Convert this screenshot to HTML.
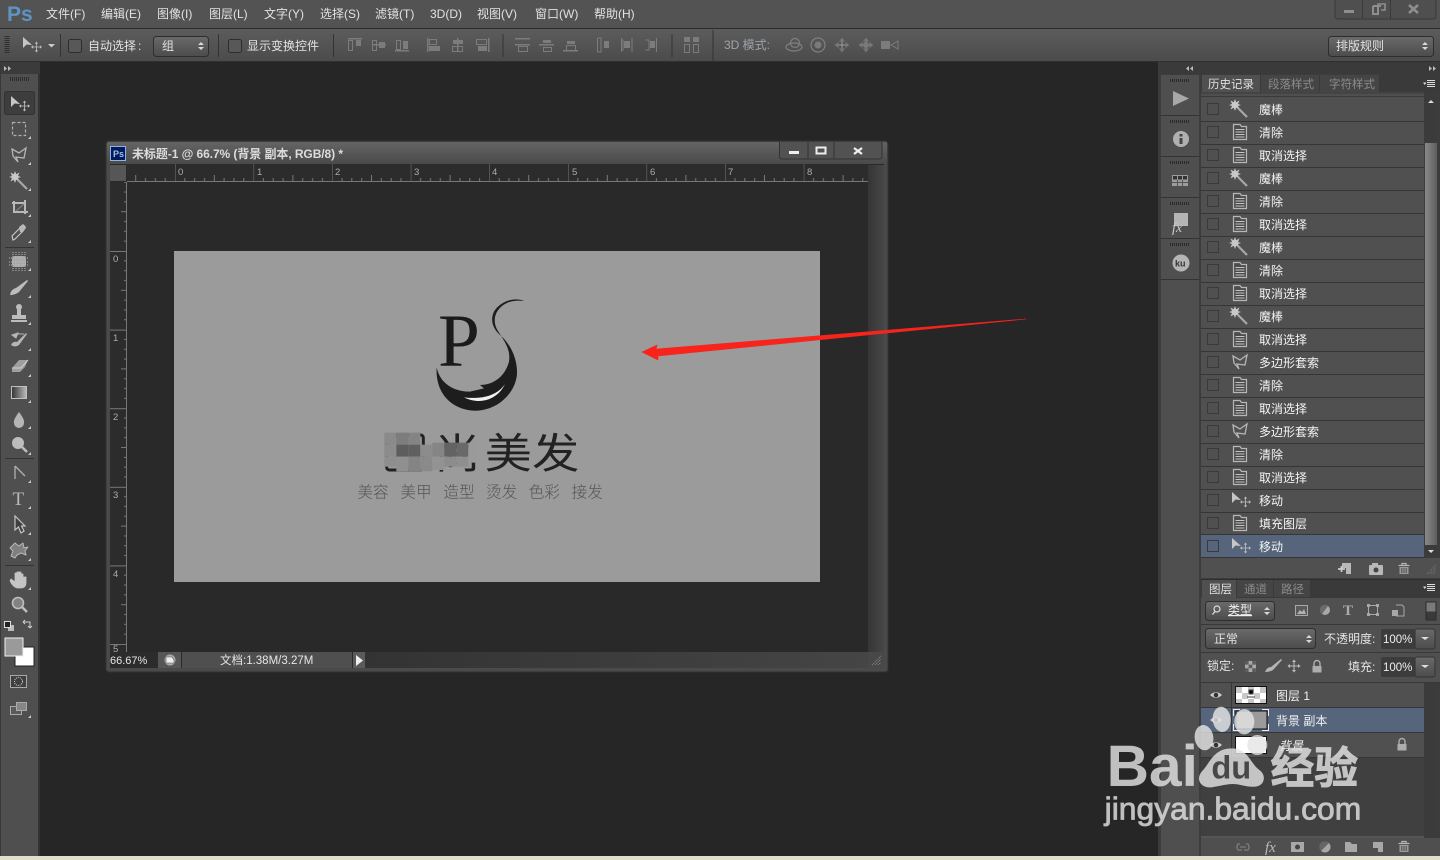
<!DOCTYPE html>
<html lang="zh-CN">
<head>
<meta charset="utf-8">
<title>Photoshop</title>
<style>
html,body{margin:0;padding:0;background:#262626;overflow:hidden}
svg{display:block;position:absolute;left:0;top:0}
text{font-family:"Liberation Sans","WenQuanYi Zen Hei","Noto Sans CJK SC",sans-serif;font-size:12px;fill:#e6e6e6}
.m{font-size:12px;fill:#e2e2e2}
.o{font-size:12px;fill:#e2e2e2}
.h{font-size:12px;fill:#f4f4f4}
.t{font-size:11.5px;fill:#e0e0e0}
.td{font-size:11.5px;fill:#8c8c8c}
.r{font-size:9.5px;fill:#a3aebb}
.st{fill:none;stroke:#b0b0b0;stroke-width:1.2}
.gf{fill:#b4b4b4}
.gd{fill:#7d7d7d}
.sd{fill:none;stroke:#7f7f7f;stroke-width:1.2}
</style>
</head>
<body>
<svg width="1440" height="860" viewBox="0 0 1440 860" xmlns="http://www.w3.org/2000/svg">
<defs>
<linearGradient id="gOpt" x1="0" y1="0" x2="0" y2="1"><stop offset="0" stop-color="#5c5c5c"/><stop offset="1" stop-color="#4b4b4b"/></linearGradient>
<linearGradient id="gSel" x1="0" y1="0" x2="0" y2="1"><stop offset="0" stop-color="#6a6a6a"/><stop offset="1" stop-color="#4c4c4c"/></linearGradient>
<linearGradient id="gTitle" x1="0" y1="0" x2="0" y2="1"><stop offset="0" stop-color="#646464"/><stop offset="1" stop-color="#4a4a4a"/></linearGradient>
<linearGradient id="gScr" x1="0" y1="0" x2="1" y2="0"><stop offset="0" stop-color="#353535"/><stop offset="1" stop-color="#474747"/></linearGradient>
<linearGradient id="gThumb" x1="0" y1="0" x2="1" y2="0"><stop offset="0" stop-color="#8a8a8a"/><stop offset="1" stop-color="#5e5e5e"/></linearGradient>
<linearGradient id="gGrad" x1="0" y1="0" x2="1" y2="0"><stop offset="0" stop-color="#333"/><stop offset="1" stop-color="#bbb"/></linearGradient>
<linearGradient id="gStat" x1="0" y1="0" x2="1" y2="0"><stop offset="0" stop-color="#333"/><stop offset="1" stop-color="#454545"/></linearGradient>
<pattern id="rulH" x="175" y="164" width="78.6" height="17" patternUnits="userSpaceOnUse">
<path d="M0 0V17M9.8 14V17M19.6 14V17M29.5 14V17M39.3 11V17M49.1 14V17M59 14V17M68.8 14V17" stroke="#787878" stroke-width="1" fill="none"/></pattern>
<pattern id="rulV" x="110" y="251" width="17" height="78.6" patternUnits="userSpaceOnUse">
<path d="M0 .5H17M14 9.8H17M14 19.6H17M14 29.5H17M11 39.3H17M14 49.1H17M14 59H17M14 68.8H17" stroke="#787878" stroke-width="1" fill="none"/></pattern>
<pattern id="chk" x="1236" y="687" width="12" height="12" patternUnits="userSpaceOnUse"><rect width="12" height="12" fill="#fff"/><rect width="6" height="6" fill="#c8c8c8"/><rect x="6" y="6" width="6" height="6" fill="#c8c8c8"/></pattern>

<path id="tri" d="M3 0V3H0Z" fill="#c9c9c9"/>
<g id="cross4"><path d="M0-5V5M-5 0H5" stroke="#bdbdbd" stroke-width="1" fill="none"/><path d="M0-6.5L-2-4H2ZM0 6.5L-2 4H2ZM-6.5 0L-4-2V2ZM6.5 0L4-2V2Z" fill="#bdbdbd"/></g>
<g id="mv"><path d="M-8-8V3L-4.5-.5 1 0Z" fill="#c6c6c6"/><use href="#cross4" transform="translate(5.5 2) scale(.85)"/></g>
<g id="wand"><path d="M-4-10L-2.8-6.8 .5-8.5-1-5 2-4-1-3 .5 .5-2.8-1.2-4 2-5.2-1.2-8.500 .5-7-3-10-4-7-5-8.500-8.500-5.200-6.800Z" fill="#c8c8c8"/><path d="M-1-1L8 8" stroke="#a8a8a8" stroke-width="2.200"/></g>
<g id="doc"><path d="M-6.500-7.500V7.500H6.500V-5.500H1.500L0-7.500Z" fill="#4d4d4d" stroke="#b8b8b8" stroke-width="1.200"/><path d="M-4.500-2.500H4.500M-4.500 0H4.500M-4.500 2.500H4.500M-4.500 5H4.500" stroke="#c4c4c4" stroke-width="1"/></g>
<g id="polyL"><path d="M-7-6L0-2 7-7 5 3-3 2-1 7-6 1Z" fill="none" stroke="#b5b5b5" stroke-width="1.300"/></g>
<g id="eye"><path d="M-6 0Q0-5.500 6 0Q0 5.500-6 0Z" fill="#cfcfcf"/><circle r="2.300" fill="#333"/></g>
<g id="trash"><path d="M-5.500-3.500H5.500M-2-3.500V-5.500H2V-3.500" stroke="#b5b5b5" stroke-width="1.300" fill="none"/><path d="M-4.500-2V5H4.500V-2Z" fill="#9a9a9a"/><path d="M-2.200-1V4M0-1V4M2.200-1V4" stroke="#4d4d4d"/></g>
<g id="lock"><path d="M-3-1V-3.500A3 3 0 0 1 3-3.500V-1" fill="none" stroke="#adadad" stroke-width="1.400"/><rect x="-4.500" y="-1" width="9" height="6.500" fill="#adadad"/></g>
<g id="sel"><path d="M0-4L-3-1H3ZM0 4L-3 1H3Z" fill="#d8d8d8"/></g>
<g id="menuI"><path d="M-7-1.500L-3.500-1.500-5.200 1Z" fill="#ddd"/><path d="M-3-3.500H5M-3-1.500H5M-3 .5H5M-3 2.500H5" stroke="#ddd" stroke-width="1"/></g>
</defs>

<!-- base -->
<rect width="1440" height="860" fill="#262626"/>
<rect y="0" width="1440" height="28" fill="#535353"/>
<rect y="28" width="1440" height="1" fill="#2b2b2b"/>
<rect y="29" width="1440" height="33" fill="url(#gOpt)"/>
<rect y="61" width="1440" height="1" fill="#303030"/>

<!-- menu -->
<text x="7" y="21" style="font-size:21px;font-weight:bold;fill:#5f93c4">Ps</text>
<text class="m" x="46" y="18">文件(F)</text>
<text class="m" x="101" y="18">编辑(E)</text>
<text class="m" x="157" y="18">图像(I)</text>
<text class="m" x="209" y="18">图层(L)</text>
<text class="m" x="264" y="18">文字(Y)</text>
<text class="m" x="320" y="18">选择(S)</text>
<text class="m" x="375" y="18">滤镜(T)</text>
<text class="m" x="430" y="18">3D(D)</text>
<text class="m" x="477" y="18">视图(V)</text>
<text class="m" x="535" y="18">窗口(W)</text>
<text class="m" x="594" y="18">帮助(H)</text>

<!-- window controls -->
<path d="M1335 0V16Q1335 19 1338 19H1433Q1436 19 1436 16V0" fill="#4f4f4f" stroke="#3a3a3a"/>
<path d="M1362.500 0V19M1390.500 0V19" stroke="#3a3a3a"/>
<rect x="1344" y="10" width="10" height="3" fill="#8e8e8e"/>
<path d="M1373 6H1381M1373 6V14H1378V7" fill="none" stroke="#8e8e8e" stroke-width="2"/><path d="M1377 4H1385V10H1381" fill="none" stroke="#8e8e8e" stroke-width="1.600"/>
<path d="M1409 5L1418 13M1418 5L1409 13" stroke="#8e8e8e" stroke-width="2.600"/>

<!-- options bar -->
<path d="M7 36V54" stroke="#2e2e2e" stroke-width="5" stroke-dasharray="1 1"/>
<use href="#mv" x="31" y="45" transform="translate(0 0)"/>
<path d="M48 44H55L51.500 47.500Z" fill="#ccc"/>
<path d="M60.500 34V57M218.500 34V57M333.500 34V57M503 34V57M672 34V57M713 30V61" stroke="#333" stroke-width="1"/>
<rect x="68.500" y="39.500" width="13" height="13" rx="2" fill="#585858" stroke="#2d2d2d"/>
<text class="o" x="88" y="50">自动选择<tspan dx="2">:</tspan></text>
<rect x="153.500" y="36.500" width="55" height="20" rx="3" fill="url(#gSel)" stroke="#2e2e2e"/>
<text class="o" x="162" y="50">组</text>
<use href="#sel" x="201" y="46"/>
<rect x="228.500" y="39.500" width="13" height="13" rx="2" fill="#585858" stroke="#2d2d2d"/>
<text class="o" x="247" y="50">显示变换控件</text>
<!-- align icons -->
<g fill="#7c7c7c" stroke="none">
<rect x="348" y="38" width="14" height="1.500"/><rect x="356" y="40" width="5" height="6"/>
<rect x="372" y="44" width="14" height="1.500"/><rect x="379" y="42" width="6" height="6"/>
<rect x="395" y="50" width="14" height="1.500"/><rect x="403" y="41" width="5" height="8"/>
<rect x="427" y="38" width="1.500" height="14"/><rect x="429" y="46" width="11" height="5"/>
<rect x="457" y="38" width="1.500" height="14"/><rect x="453" y="40" width="10" height="4"/>
<rect x="476" y="38" width="1.500" height="14" transform="translate(12 0)"/><rect x="478" y="46" width="9" height="5"/>
<rect x="515" y="38" width="15" height="1.500"/><rect x="515" y="44" width="15" height="1.500"/>
<rect x="539" y="44" width="15" height="1.500"/><rect x="543" y="40" width="8" height="3"/>
<rect x="563" y="50" width="15" height="1.500"/><rect x="567" y="41" width="8" height="3"/>
<rect x="604" y="41" width="5" height="7"/><rect x="624" y="41" width="6" height="7"/><rect x="650" y="41" width="5" height="7"/>
<rect x="684" y="37" width="6" height="5"/><rect x="693" y="37" width="6" height="5"/>
</g>
<g fill="none" stroke="#7c7c7c" stroke-width="1">
<rect x="348.500" y="40.500" width="4" height="10"/><rect x="372.500" y="40.500" width="4" height="10"/><rect x="396.500" y="40.500" width="4" height="9"/>
<rect x="429.500" y="39.500" width="7" height="5"/><rect x="452.500" y="46.500" width="10" height="5"/><rect x="476.500" y="39.500" width="10" height="5"/>
<rect x="518.500" y="46.500" width="9" height="5"/><rect x="543.500" y="47.500" width="8" height="4"/><rect x="566.500" y="45.500" width="9" height="5"/>
<path d="M597.500 38V52M597.500 38H601V52H597.500M621.500 38V52M621.500 40H623V50H621.500M632 38V52M645.500 40H649V50H645.500M656.500 38V52"/>
<rect x="684.500" y="44.500" width="5" height="8"/><rect x="693.500" y="44.500" width="5" height="8"/>
</g>
<text x="724" y="49" style="font-size:12px;fill:#9ea3a8">3D 模式:</text>
<g class="sd">
<ellipse cx="794" cy="47" rx="8" ry="4"/><circle cx="795" cy="43" r="4.500"/>
<circle cx="818" cy="45" r="7"/>
<use href="#cross4" x="842" y="45" opacity=".7"/>
<use href="#cross4" x="866" y="45" opacity=".7"/>
</g>
<circle cx="818" cy="45" r="3.500" fill="#7a7a7a"/>
<circle cx="866" cy="45" r="3" fill="#7a7a7a"/>
<rect x="881" y="41" width="9" height="8" fill="#7c7c7c"/><path d="M891 45L898 41V49Z" fill="none" stroke="#7c7c7c"/>
<rect x="1328.500" y="36.500" width="105" height="20" rx="3" fill="url(#gSel)" stroke="#2e2e2e"/>
<text class="o" x="1336" y="50">排版规则</text>
<use href="#sel" x="1425" y="46"/>

<!-- left toolbar -->
<rect x="0" y="62" width="40" height="794" fill="#4f4f4f"/>
<rect x="38" y="62" width="2" height="794" fill="#333"/>
<rect x="0" y="62" width="40" height="12" fill="#3b3b3b"/>
<rect x="0" y="62" width="1" height="794" fill="#383838"/>
<path d="M4 66L7 68.500 4 71ZM8 66L11 68.500 8 71Z" fill="#bbb"/>
<path d="M10 79H29" stroke="#2e2e2e" stroke-width="4" stroke-dasharray="1 1"/>
<rect x="4.500" y="91.500" width="30" height="23" rx="2" fill="#3d3d3d" stroke="#333"/>
<use href="#mv" x="19" y="104"/>
<rect x="12.500" y="122.500" width="13" height="13" class="st" stroke-dasharray="3 2"/><use href="#tri" x="28" y="136"/>
<use href="#polyL" x="19" y="155"/><use href="#tri" x="28" y="162"/>
<use href="#wand" x="19" y="181"/><use href="#tri" x="28" y="188"/>
<path d="M14 203H25V214M12 203H14M14 201V212H25M25 200V203M25 212H28" fill="none" stroke="#b8b8b8" stroke-width="2"/><path d="M16 211L24 204" stroke="#888"/><use href="#tri" x="28" y="214"/>
<path d="M13 240L12 236 20 228 23 231 15 239Z" fill="none" stroke="#c4c4c4" stroke-width="1.200"/><path d="M20 232L19 227 23 224Q26 226 26 228L23 232Z" fill="#b8b8b8"/><use href="#tri" x="28" y="240"/>
<rect x="5" y="247" width="29" height="1" fill="#333"/>
<rect x="12" y="256" width="14" height="11" rx="3" fill="#a8a8a8"/><path d="M13 252V271M16 252V271M19 252V271M22 252V271M25 252V271M9 258H29M9 262H29M9 265H29" stroke="#b8b8b8" stroke-dasharray="1 1"/><use href="#tri" x="28" y="268"/>
<path d="M10 295Q11 289 16 288L27 280 28 281 19 292Q15 295 10 295Z" fill="#bcbcbc"/><use href="#tri" x="28" y="295"/>
<path d="M17 307H21V315H26V319H12V315H17Z" fill="#bcbcbc"/><circle cx="19" cy="307" r="3" fill="#bcbcbc"/><rect x="11" y="320" width="16" height="2" fill="#bcbcbc"/><use href="#tri" x="28" y="322"/>
<path d="M11 345Q13 341 17 342L26 333 27 334 19 345Q15 348 11 345Z" fill="#b6b6b6"/><path d="M12 335L18 333 16 338ZM16 334H24" fill="#b6b6b6" stroke="#b6b6b6"/><use href="#tri" x="28" y="348"/>
<path d="M12 368L19 360H28L25 367 20 372H12Z" fill="#9f9f9f"/><path d="M12 368H21L28 360" fill="none" stroke="#cfcfcf"/><use href="#tri" x="28" y="374"/>
<rect x="11.500" y="386.500" width="15" height="12" fill="url(#gGrad)" stroke="#c0c0c0"/><use href="#tri" x="28" y="400"/>
<path d="M19 412Q25 420 24 423A5 5 0 0 1 14 423Q13 420 19 412Z" fill="#b5b5b5"/><use href="#tri" x="28" y="426"/>
<circle cx="18" cy="443" r="6" fill="#bdbdbd"/><path d="M22 447L27 452" stroke="#bdbdbd" stroke-width="2.500"/><use href="#tri" x="28" y="452"/>
<rect x="5" y="458" width="29" height="1" fill="#333"/>
<path d="M15 466V479M15 466L25 476" fill="none" stroke="#b0b0b0" stroke-width="1.300"/><use href="#tri" x="28" y="480"/>
<text x="12.500" y="505" style="font-family:'Liberation Serif',serif;font-size:19px;fill:#b9b9b9">T</text><use href="#tri" x="28" y="506"/>
<path d="M15 516V530L18.500 527 21 533 24 531 21.500 526H25Z" fill="#3f3f3f" stroke="#c4c4c4" stroke-width="1.200"/><use href="#tri" x="28" y="532"/>
<path d="M15 543L19 546 23 543 24 548 28 547 25 551 26 555 21 553 17 555 15 558 11 556 13 551 10 548Z" fill="#7f7f7f" stroke="#b8b8b8" stroke-linejoin="round"/><use href="#tri" x="28" y="558"/>
<rect x="5" y="565" width="29" height="1" fill="#333"/>
<path d="M11 579L15 582V573H17V580 572H19V580 572H21V580 574H23V583 577H26V584Q25 588 21 588H17Q13 587 10 581Z" fill="#c4c4c4" stroke="#c4c4c4" stroke-width=".8"/><use href="#tri" x="28" y="587"/>
<circle cx="18" cy="603" r="5.500" fill="#828282" stroke="#bdbdbd" stroke-width="1.600"/><path d="M22 607L27 612" stroke="#bdbdbd" stroke-width="2.500"/>
<rect x="8" y="625" width="6" height="6" fill="#bbb"/><rect x="4.500" y="621.500" width="6" height="6" fill="#222" stroke="#ddd"/>
<path d="M23 622H30V628M23 622L25 620M23 622L25 624M30 628L28 626M30 628L32 626" fill="none" stroke="#cfcfcf"/>
<rect x="15" y="647" width="19" height="19" fill="#fff" stroke="#222"/>
<rect x="5" y="638" width="18" height="18" fill="#9a9a9a" stroke="#f0f0f0"/>
<rect x="10.500" y="675.500" width="16" height="12" fill="#3f3f3f" stroke="#a8a8a8"/><circle cx="18.500" cy="681.500" r="4" fill="none" stroke="#d0d0d0" stroke-dasharray="1 1"/>
<rect x="10.500" y="706.500" width="11" height="8" fill="#5a5a5a" stroke="#aaa"/><rect x="16.500" y="702.500" width="10" height="8" fill="#868686" stroke="#aaa"/><use href="#tri" x="28" y="715"/>

<!-- document window -->
<rect x="106" y="141" width="782" height="531" rx="3" fill="#4a4a4a" stroke="#333"/>
<path d="M107 164V144Q107 142 109 142H885Q887 142 887 144V164Z" fill="url(#gTitle)"/>
<path d="M779.500 142V156Q779.500 159 782 159H879Q882 159 882 156V142" fill="#525252" stroke="#333"/>
<path d="M808 142V159M834 142V159" stroke="#333"/>
<rect x="789" y="151" width="10" height="3" fill="#eee"/>
<rect x="816.500" y="147.500" width="9" height="6" fill="none" stroke="#eee" stroke-width="2"/>
<path d="M854 148L862 154M862 148L854 154" stroke="#eee" stroke-width="2.200"/>
<rect x="110.500" y="146.500" width="15" height="14" fill="#001a5c" stroke="#8bb4e6"/>
<text x="113" y="157" style="font-size:9px;font-weight:bold;fill:#9cc4ee">Ps</text>
<text x="132" y="158" textLength="211" style="font-size:12px;font-weight:bold;fill:#dcdcdc">未标题-1 @ 66.7% (背景 副本, RGB/8) *</text>

<rect x="110" y="164" width="774" height="504" fill="#292929"/>
<rect x="127" y="164" width="741" height="17" fill="#2c2c2c"/>
<rect x="127" y="164" width="741" height="17" fill="url(#rulH)"/>
<rect x="127" y="181" width="741" height="1" fill="#777"/>
<rect x="110" y="182" width="17" height="470" fill="#2c2c2c"/>
<rect x="110" y="182" width="17" height="470" fill="url(#rulV)"/>
<rect x="126" y="182" width="1" height="470" fill="#777"/>
<rect x="110" y="165" width="16" height="16" fill="#565656"/>
<text class="r" x="178" y="175">0</text><text class="r" x="257" y="175">1</text><text class="r" x="335" y="175">2</text><text class="r" x="414" y="175">3</text><text class="r" x="492" y="175">4</text><text class="r" x="572" y="175">5</text><text class="r" x="650" y="175">6</text><text class="r" x="728" y="175">7</text><text class="r" x="807" y="175">8</text>
<text class="r" x="113" y="262">0</text><text class="r" x="113" y="341">1</text><text class="r" x="113" y="420">2</text><text class="r" x="113" y="498">3</text><text class="r" x="113" y="577">4</text><text class="r" x="113" y="652">5</text>
<rect x="868" y="165" width="16" height="487" fill="url(#gScr)"/>
<rect x="110" y="652" width="48" height="16" fill="#2c2c2c"/>
<rect x="158" y="652" width="23" height="16" fill="#565656"/>
<rect x="182" y="652" width="170" height="16" fill="#4f4f4f"/>
<rect x="353" y="652" width="12" height="16" fill="#5b5b5b"/>
<rect x="365" y="652" width="503" height="16" fill="url(#gStat)"/>
<rect x="868" y="652" width="16" height="16" fill="#484848"/>
<path d="M872 665L881 656M875 665L881 659M878 665L881 662" stroke="#8a8a8a" stroke-dasharray="1 1"/>
<text x="110" y="664" style="font-size:11px;fill:#e6e6e6">66.67%</text>
<circle cx="170" cy="660" r="5.500" fill="#aaa"/><path d="M166 657H172L174 660V663H166Z" fill="#eee" stroke="#555" stroke-width=".6"/>
<text x="220" y="664" style="font-size:11.500px;fill:#e6e6e6">文档:1.38M/3.27M</text>
<path d="M356 655V666L363 660.500Z" fill="#eee"/>

<!-- image -->
<rect x="174" y="251" width="646" height="331" fill="#9b9b9b"/>
<g transform="translate(340 280) scale(.33333)">
<text x="294" y="258" style="font-family:'Liberation Serif',serif;font-size:226px;fill:#1b1b1b">P</text>
<path d="M553 63C520 50 480 65 462 95C450 120 458 145 480 165C515 195 532 240 531 280C528 340 470 395 400 392C340 388 285 345 290 262C300 310 340 335 390 335L432 325 420 315C460 315 495 290 507 245C513 205 490 180 472 150C458 125 462 95 490 75C510 62 530 60 553 63Z" fill="#1d1d1d"/>
<path d="M372 352C420 358 470 350 495 312C475 355 425 378 372 352Z" fill="#f1f1f1"/>
<text transform="translate(282 564) scale(1 .88)" x="0" y="0" style="font-family:'Noto Sans CJK SC',sans-serif;font-size:140px;font-weight:400;fill:#222">尚</text>
<text transform="translate(434 564) scale(1 .88)" x="0" y="0" style="font-family:'Noto Sans CJK SC',sans-serif;font-size:142px;font-weight:400;fill:#222">美发</text>
<rect x="140" y="465" width="110" height="105" rx="8" fill="none" stroke="#222" stroke-width="9"/>
<g>
<rect x="133" y="458" width="36" height="36" fill="#8a8a8a"/><rect x="169" y="458" width="36" height="36" fill="#7d7d7d"/><rect x="205" y="458" width="36" height="36" fill="#848484"/>
<rect x="133" y="494" width="36" height="36" fill="#8c8c8c"/><rect x="169" y="494" width="36" height="36" fill="#5d5d5d"/><rect x="205" y="494" width="36" height="36" fill="#606060"/><rect x="241" y="494" width="36" height="36" fill="#8c8c8c"/><rect x="277" y="488" width="36" height="42" fill="#858585"/><rect x="313" y="488" width="36" height="42" fill="#636363"/><rect x="349" y="488" width="36" height="42" fill="#696969"/>
<rect x="133" y="530" width="36" height="30" fill="#8e8e8e"/><rect x="169" y="530" width="36" height="44" fill="#909090"/><rect x="205" y="530" width="36" height="44" fill="#848484"/><rect x="241" y="530" width="36" height="44" fill="#8a8a8a"/><rect x="277" y="530" width="36" height="40" fill="#939393"/><rect x="313" y="530" width="36" height="30" fill="#8c8c8c"/><rect x="349" y="530" width="36" height="30" fill="#8f8f8f"/>
<rect x="385" y="488" width="22" height="60" fill="#9a9a9a"/>
</g>
<text x="52" y="652" style="font-family:'Noto Sans CJK SC',sans-serif;font-size:47px;font-weight:300;fill:#555">美容</text>
<text x="181" y="652" style="font-family:'Noto Sans CJK SC',sans-serif;font-size:47px;font-weight:300;fill:#555">美甲</text>
<text x="310" y="652" style="font-family:'Noto Sans CJK SC',sans-serif;font-size:47px;font-weight:300;fill:#555">造型</text>
<text x="438" y="652" style="font-family:'Noto Sans CJK SC',sans-serif;font-size:47px;font-weight:300;fill:#555">烫发</text>
<text x="566" y="652" style="font-family:'Noto Sans CJK SC',sans-serif;font-size:47px;font-weight:300;fill:#555">色彩</text>
<text x="695" y="652" style="font-family:'Noto Sans CJK SC',sans-serif;font-size:47px;font-weight:300;fill:#555">接发</text>
</g>
<!-- red arrow -->
<path d="M642 352L657 345 656 349 1026 319 658 356 658 360Z" fill="#f8241c" stroke="#f8241c" stroke-width=".6"/>

<!-- right dock -->
<rect x="1158" y="62" width="282" height="794" fill="#3c3c3c"/>
<rect x="1160" y="62" width="280" height="12" fill="#3a3a3a"/>
<path d="M1189 66L1186 68.500 1189 71ZM1193 66L1190 68.500 1193 71ZM1429 66L1432 68.500 1429 71ZM1433 66L1436 68.500 1433 71Z" fill="#bbb"/>
<rect x="1161" y="75" width="38" height="781" fill="#4f4f4f"/>
<path d="M1161 115.500H1199M1161 156.500H1199M1161 197.500H1199M1161 238.500H1199M1161 279.500H1199" stroke="#333"/>
<path d="M1170 80.500H1190M1170 121.500H1190M1170 162.500H1190M1170 203.500H1190M1170 244.500H1190" stroke="#2a2a2a" stroke-width="3" stroke-dasharray="1 1"/>
<path d="M1173 91V106L1189 98.500Z" fill="#a8a8a8"/>
<circle cx="1181" cy="139" r="8" fill="#b0b0b0"/><rect x="1179.500" y="138" width="3" height="6" fill="#444"/><rect x="1179.500" y="134" width="3" height="2.500" fill="#444"/>
<rect x="1172" y="175" width="16" height="11" fill="#9c9c9c"/><path d="M1173 176H1177V179.500H1173ZM1178 176H1182V179.500H1178ZM1183 176H1187V179.500H1183Z" fill="#333"/><path d="M1177.500 180V186M1182.500 180V186M1172 182.500H1188" stroke="#555"/>
<rect x="1174" y="213" width="14" height="13" fill="#b5b5b5"/><text x="1172" y="232" style="font-family:'Liberation Serif',serif;font-style:italic;font-size:14px;fill:#ccc">fx</text>
<circle cx="1181" cy="263" r="8.500" fill="#b5b5b5"/><text x="1175" y="266.500" style="font-size:9px;font-weight:bold;fill:#333">ku</text>

<!-- history panel -->
<rect x="1201" y="75" width="239" height="18" fill="#3a3a3a"/>
<rect x="1202" y="75" width="58" height="18" fill="#505050"/>
<rect x="1261" y="75" width="58" height="17" fill="#454545"/>
<rect x="1320" y="75" width="59" height="17" fill="#454545"/>
<text class="t" x="1208" y="88">历史记录</text><text class="td" x="1268" y="88">段落样式</text><text class="td" x="1329" y="88">字符样式</text>
<use href="#menuI" x="1430" y="84"/>
<rect x="1201" y="92" width="223" height="6" fill="#4f4f4f"/>
<path d="M1201 93H1424M1201 96.500H1424" stroke="#3a3a3a"/>
<rect x="1425" y="93" width="12" height="465" fill="#3b3b3b"/>
<rect x="1425" y="143" width="12" height="402" fill="url(#gThumb)"/>
<path d="M1431 100L1428 103H1434ZM1431 553L1428 550H1434Z" fill="#ddd"/>
<rect x="1201" y="98" width="223" height="460" fill="#505050"/>
<rect x="1201" y="535" width="223" height="22" fill="#56657b"/>
<path d="M1201 121.500H1424M1201 144.500H1424M1201 167.500H1424M1201 190.500H1424M1201 213.500H1424M1201 236.500H1424M1201 259.500H1424M1201 282.500H1424M1201 305.500H1424M1201 328.500H1424M1201 351.500H1424M1201 374.500H1424M1201 397.500H1424M1201 420.500H1424M1201 443.500H1424M1201 466.500H1424M1201 489.500H1424M1201 512.500H1424M1201 534.500H1424M1201 557.500H1424" stroke="#363636"/>
<g fill="none" stroke="#3a3a3a">
<rect x="1207.500" y="103.500" width="11" height="11"/><rect x="1207.500" y="126.500" width="11" height="11"/><rect x="1207.500" y="149.500" width="11" height="11"/><rect x="1207.500" y="172.500" width="11" height="11"/><rect x="1207.500" y="195.500" width="11" height="11"/><rect x="1207.500" y="218.500" width="11" height="11"/><rect x="1207.500" y="241.500" width="11" height="11"/><rect x="1207.500" y="264.500" width="11" height="11"/><rect x="1207.500" y="287.500" width="11" height="11"/><rect x="1207.500" y="310.500" width="11" height="11"/><rect x="1207.500" y="333.500" width="11" height="11"/><rect x="1207.500" y="356.500" width="11" height="11"/><rect x="1207.500" y="379.500" width="11" height="11"/><rect x="1207.500" y="402.500" width="11" height="11"/><rect x="1207.500" y="425.500" width="11" height="11"/><rect x="1207.500" y="448.500" width="11" height="11"/><rect x="1207.500" y="471.500" width="11" height="11"/><rect x="1207.500" y="494.500" width="11" height="11"/><rect x="1207.500" y="517.500" width="11" height="11"/><rect x="1207.500" y="540.500" width="11" height="11"/>
</g>
<use href="#wand" x="1239" y="109"/><use href="#doc" x="1240" y="132"/><use href="#doc" x="1240" y="155"/>
<use href="#wand" x="1239" y="178"/><use href="#doc" x="1240" y="201"/><use href="#doc" x="1240" y="224"/>
<use href="#wand" x="1239" y="247"/><use href="#doc" x="1240" y="270"/><use href="#doc" x="1240" y="293"/>
<use href="#wand" x="1239" y="316"/><use href="#doc" x="1240" y="339"/><use href="#polyL" x="1240" y="362"/>
<use href="#doc" x="1240" y="385"/><use href="#doc" x="1240" y="408"/><use href="#polyL" x="1240" y="431"/>
<use href="#doc" x="1240" y="454"/><use href="#doc" x="1240" y="477"/><use href="#mv" x="1240" y="500"/>
<use href="#doc" x="1240" y="523"/><use href="#mv" x="1240" y="546"/>
<text class="h" x="1259" y="114">魔棒</text><text class="h" x="1259" y="137">清除</text><text class="h" x="1259" y="160">取消选择</text>
<text class="h" x="1259" y="183">魔棒</text><text class="h" x="1259" y="206">清除</text><text class="h" x="1259" y="229">取消选择</text>
<text class="h" x="1259" y="252">魔棒</text><text class="h" x="1259" y="275">清除</text><text class="h" x="1259" y="298">取消选择</text>
<text class="h" x="1259" y="321">魔棒</text><text class="h" x="1259" y="344">取消选择</text><text class="h" x="1259" y="367">多边形套索</text>
<text class="h" x="1259" y="390">清除</text><text class="h" x="1259" y="413">取消选择</text><text class="h" x="1259" y="436">多边形套索</text>
<text class="h" x="1259" y="459">清除</text><text class="h" x="1259" y="482">取消选择</text><text class="h" x="1259" y="505">移动</text>
<text class="h" x="1259" y="528">填充图层</text><text class="h" x="1259" y="551">移动</text>
<rect x="1201" y="558" width="239" height="20" fill="#505050"/>
<path d="M1338 569H1345M1341.500 566V572" stroke="#ccc" stroke-width="1.800"/><path d="M1342 563H1351V574H1346V568H1342Z" fill="#b8b8b8"/>
<rect x="1369" y="565" width="14" height="10" rx="1" fill="#b8b8b8"/><rect x="1372" y="563" width="6" height="3" fill="#b8b8b8"/><circle cx="1376" cy="570" r="2.500" fill="#444"/>
<use href="#trash" x="1404" y="569"/>
<path d="M1427 574L1436 565M1430 574L1436 568M1433 574L1436 571" stroke="#7a7a7a" stroke-dasharray="1 1"/>

<!-- layers panel -->
<rect x="1201" y="579" width="239" height="1" fill="#2e2e2e"/>
<rect x="1201" y="580" width="239" height="18" fill="#3a3a3a"/>
<rect x="1202" y="580" width="34" height="18" fill="#505050"/>
<rect x="1237" y="580" width="36" height="17" fill="#454545"/>
<rect x="1274" y="580" width="36" height="17" fill="#454545"/>
<text class="t" x="1209" y="593">图层</text><text class="td" x="1244" y="593">通道</text><text class="td" x="1281" y="593">路径</text>
<use href="#menuI" x="1430" y="588"/>
<rect x="1201" y="598" width="239" height="85" fill="#505050"/>
<path d="M1201 624.500H1440M1201 652.500H1440M1201 682.500H1440" stroke="#383838"/>
<rect x="1205.500" y="601.500" width="69" height="19" rx="3" fill="url(#gSel)" stroke="#2e2e2e"/>
<circle cx="1217" cy="609" r="3" fill="none" stroke="#ddd" stroke-width="1.200"/><path d="M1215 611.500L1212.500 614.500" stroke="#ddd" stroke-width="1.300"/>
<text x="1228" y="614" style="font-size:12px;fill:#eee;text-decoration:underline">类型</text>
<use href="#sel" x="1267" y="611"/>
<rect x="1295.500" y="605.500" width="12" height="10" fill="#5a5a5a" stroke="#a8a8a8"/><path d="M1297 614L1300 610 1302 612 1304 609 1306 614Z" fill="#b0b0b0"/>
<circle cx="1325" cy="610" r="5" fill="#a8a8a8"/><path d="M1322 614L1328 606A5 5 0 0 0 1322 614Z" fill="#6a6a6a"/>
<text x="1343" y="615" style="font-family:'Liberation Serif',serif;font-size:15px;font-weight:bold;fill:#aaa">T</text>
<rect x="1368.500" y="605.500" width="9" height="9" fill="none" stroke="#a8a8a8"/><path d="M1367 604h3v3h-3zM1376 604h3v3h-3zM1367 613h3v3h-3zM1376 613h3v3h-3z" fill="#a8a8a8"/>
<path d="M1396 605H1402L1404 607V616H1396" fill="none" stroke="#a8a8a8"/><rect x="1392" y="610" width="6" height="6" fill="#a8a8a8"/>
<rect x="1426" y="602" width="10" height="18" fill="#3a3a3a" stroke="#2c2c2c"/><rect x="1426.500" y="602.500" width="9" height="9" fill="#7a7a7a"/>
<rect x="1205.500" y="628.500" width="110" height="20" rx="3" fill="url(#gSel)" stroke="#2e2e2e"/>
<text class="o" x="1214" y="643">正常</text>
<use href="#sel" x="1309" y="639"/>
<text x="1324" y="643" style="font-size:12px;fill:#e4e4e4">不透明度:</text>
<rect x="1381" y="629" width="34" height="20" rx="2" fill="#3c3c3c"/>
<rect x="1415" y="629" width="20" height="20" rx="2" fill="url(#gSel)" stroke="#333"/>
<text x="1383" y="643" style="font-size:11.500px;fill:#eee">100%</text>
<path d="M1421 637H1429L1425 640Z" fill="#ddd"/>
<text x="1207" y="670" style="font-size:12px;fill:#e4e4e4">锁定:</text>
<rect x="1245" y="661" width="11" height="11" fill="#a8a8a8"/><path d="M1245 661h3.600v3.600h-3.600zM1252.300 661h3.600v3.600h-3.600zM1248.600 664.600h3.700v3.700h-3.700zM1245 668.300h3.600v3.700h-3.600zM1252.300 668.300h3.600v3.700h-3.600z" fill="#5c5c5c"/>
<path d="M1265 672Q1267 667 1271 667L1281 659 1282 660 1273 670Q1270 672 1265 672Z" fill="#b5b5b5"/>
<use href="#cross4" x="1294" y="666"/>
<use href="#lock" x="1317" y="667"/>
<text x="1348" y="671" style="font-size:12px;fill:#e4e4e4">填充:</text>
<rect x="1381" y="657" width="34" height="20" rx="2" fill="#3c3c3c"/>
<rect x="1415" y="657" width="20" height="20" rx="2" fill="url(#gSel)" stroke="#333"/>
<text x="1383" y="671" style="font-size:11.500px;fill:#eee">100%</text>
<path d="M1421 665H1429L1425 668Z" fill="#ddd"/>

<rect x="1201" y="683" width="223" height="155" fill="#404040"/>
<rect x="1425" y="683" width="12" height="155" fill="#3b3b3b"/>
<rect x="1201" y="683" width="223" height="24" fill="#505050"/>
<rect x="1201" y="708" width="223" height="24" fill="#56657b"/>
<rect x="1201" y="733" width="223" height="24" fill="#505050"/>
<path d="M1201 707.500H1424M1201 732.500H1424M1201 757.500H1424M1231.500 683V757" stroke="#363636"/>
<use href="#eye" x="1216" y="695"/><use href="#eye" x="1216" y="720"/><use href="#eye" x="1216" y="745"/>
<rect x="1235.500" y="686.500" width="31" height="17" fill="url(#chk)" stroke="#111"/>
<path d="M1249 690H1253V694H1249ZM1247 697H1255" stroke="#444"/>
<rect x="1236" y="711" width="31" height="18" fill="#9b9b9b" stroke="#111"/>
<path d="M1233.500 716V709.500H1240M1262 709.500H1268.500V716M1233.500 724V730.500H1240M1262 730.500H1268.500V724" fill="none" stroke="#eee"/>
<rect x="1235.500" y="736.500" width="31" height="17" fill="#fff" stroke="#111"/>
<text x="1276" y="700" style="font-size:12px;fill:#f2f2f2">图层 1</text>
<text x="1276" y="725" style="font-size:12px;fill:#f2f2f2">背景 副本</text>
<text x="1279" y="750" style="font-size:12px;font-style:italic;fill:#f2f2f2">背景</text>
<use href="#lock" x="1402" y="745"/>
<rect x="1201" y="838" width="239" height="18" fill="#4f4f4f"/>
<rect x="1201" y="836" width="223" height="2" fill="#555"/>
<path d="M1240 844H1238Q1236 847 1238 850H1242M1246 844H1248Q1250 847 1248 850H1244M1240 847H1246" fill="none" stroke="#7e7e7e" stroke-width="1.300"/>
<text x="1265" y="852" style="font-family:'Liberation Serif',serif;font-style:italic;font-size:15px;fill:#bbb">fx</text>
<rect x="1291" y="842" width="13" height="10" fill="#a8a8a8"/><circle cx="1297.500" cy="847" r="2.500" fill="#444"/>
<circle cx="1325" cy="847" r="5.500" fill="#a8a8a8"/><path d="M1321 851L1329 843A5.500 5.500 0 0 0 1321 851Z" fill="#666"/>
<path d="M1345 842H1350L1352 844H1357V852H1345Z" fill="#a8a8a8"/>
<path d="M1373 842H1383V852H1378V848H1373Z" fill="#a8a8a8"/>
<use href="#trash" x="1404" y="847"/>

<!-- bottom strip -->
<rect x="0" y="856" width="1440" height="4" fill="#e2dece"/>

<!-- watermark -->
<g transform="translate(1100 680) scale(.33333)" opacity=".8">
<g fill="#e6e6e6">
<ellipse cx="365" cy="118" rx="27" ry="38" transform="rotate(-5 365 118)"/>
<ellipse cx="433" cy="125" rx="30" ry="38"/>
<ellipse cx="312" cy="173" rx="28" ry="38" transform="rotate(-8 312 173)"/>
<ellipse cx="472" cy="195" rx="30" ry="30"/>
<path d="M395 205C340 205 330 250 305 275C285 300 305 325 335 322C360 318 380 312 398 312C420 312 440 322 465 320C495 318 500 285 478 270C450 250 445 205 395 205Z"/>
</g>
<text x="20" y="318" style="font-size:176px;font-weight:bold;fill:#e6e6e6">Bai</text>
<text x="334" y="296" style="font-size:98px;font-weight:bold;fill:#4a4a4a">du</text>
<text x="512" y="310" style="font-family:'Noto Sans CJK SC',sans-serif;font-size:131px;font-weight:bold;fill:#e6e6e6;stroke:#e6e6e6;stroke-width:3">经验</text>
<text x="14" y="418" style="font-size:95.500px;fill:#e6e6e6;stroke:#e6e6e6;stroke-width:2.500">jingyan.baidu.com</text>
</g>
</svg>
</body>
</html>
